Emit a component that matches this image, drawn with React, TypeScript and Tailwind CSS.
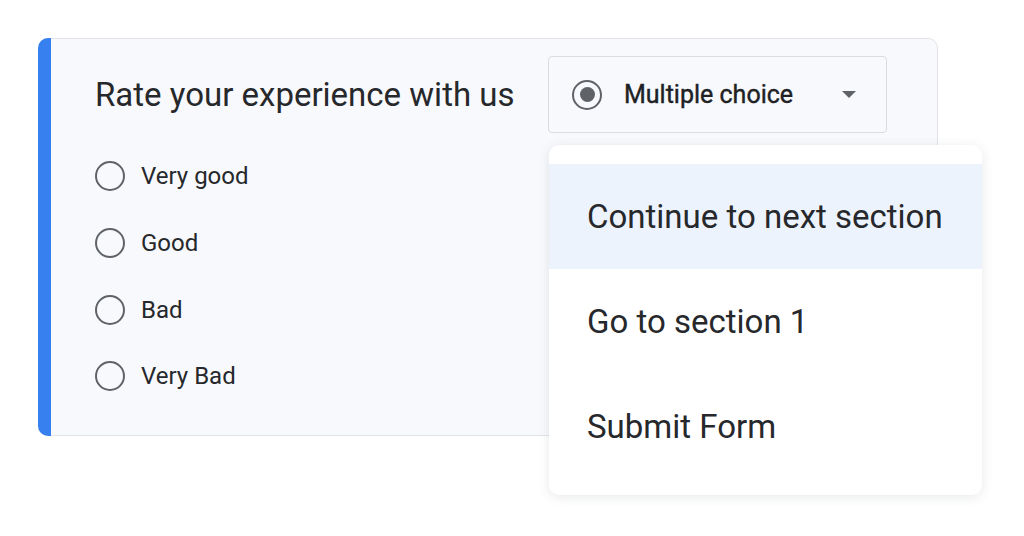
const options = ["Very good", "Good", "Bad", "Very Bad"];
const menuItems = ["Continue to next section", "Go to section 1", "Submit Form"];

function Radio() {
  return <span className="h-[30px] w-[30px] shrink-0 rounded-full border-[2.5px] border-[#5f6368]" />;
}

export default function App() {
  return (
    <div
      className="h-[536px] w-[1024px] overflow-hidden bg-white pl-[38px] pt-[38px]"
      style={{ fontFamily: "Roboto, 'Open Sans', sans-serif" }}
    >
      <div className="relative flex h-[398px] w-[900px] rounded-[10px] border border-[#e3e4e8] bg-[#f8f9fc]">
        <div className="w-[13px] shrink-0 -ml-px -my-px rounded-l-[10px] bg-[#3680ef]" />
        <div className="flex flex-1 flex-col">
          <div className="flex items-center pl-[44px] pt-[17px]">
            <div className="w-[453px] shrink-0 text-[33px] leading-none text-[#26282b]">Rate your experience with us</div>
            <div className="flex h-[77px] w-[339px] items-center rounded-[4px] border border-[#dadce0] pl-[23px] pr-[30px]">
              <span className="flex h-[30px] w-[30px] items-center justify-center rounded-full border-[2.5px] border-[#5f6368]">
                <span className="h-[15px] w-[15px] rounded-full bg-[#5f6368]" />
              </span>
              <span className="ml-[22px] flex-1 text-[25px] text-[#202124] [-webkit-text-stroke:0.4px_#202124]">Multiple choice</span>
              <svg width="14" height="7" viewBox="0 0 14 7">
                <path d="M0 0h14L7 7z" fill="#5f6368" />
              </svg>
            </div>
          </div>
          <div className="mt-[10px] flex flex-col pl-[44px]">
            {options.map((o) => (
              <div key={o} className="flex h-[66.7px] items-center gap-[16px]">
                <Radio />
                <span className="text-[24px] text-[#26282b]">{o}</span>
              </div>
            ))}
          </div>
        </div>

        <div className="absolute left-[510px] top-[106px] h-[350px] w-[433px] rounded-[10px] bg-white pt-[19px] shadow-[0_2px_12px_rgba(60,64,67,0.12)]">
          {menuItems.map((m, i) => (
            <div
              key={m}
              className={`flex h-[105px] items-center pl-[38px] text-[33px] text-[#26282b] ${i === 0 ? "bg-[#edf3fd]" : ""}`}
            >
              {m}
            </div>
          ))}
        </div>
      </div>
    </div>
  );
}
